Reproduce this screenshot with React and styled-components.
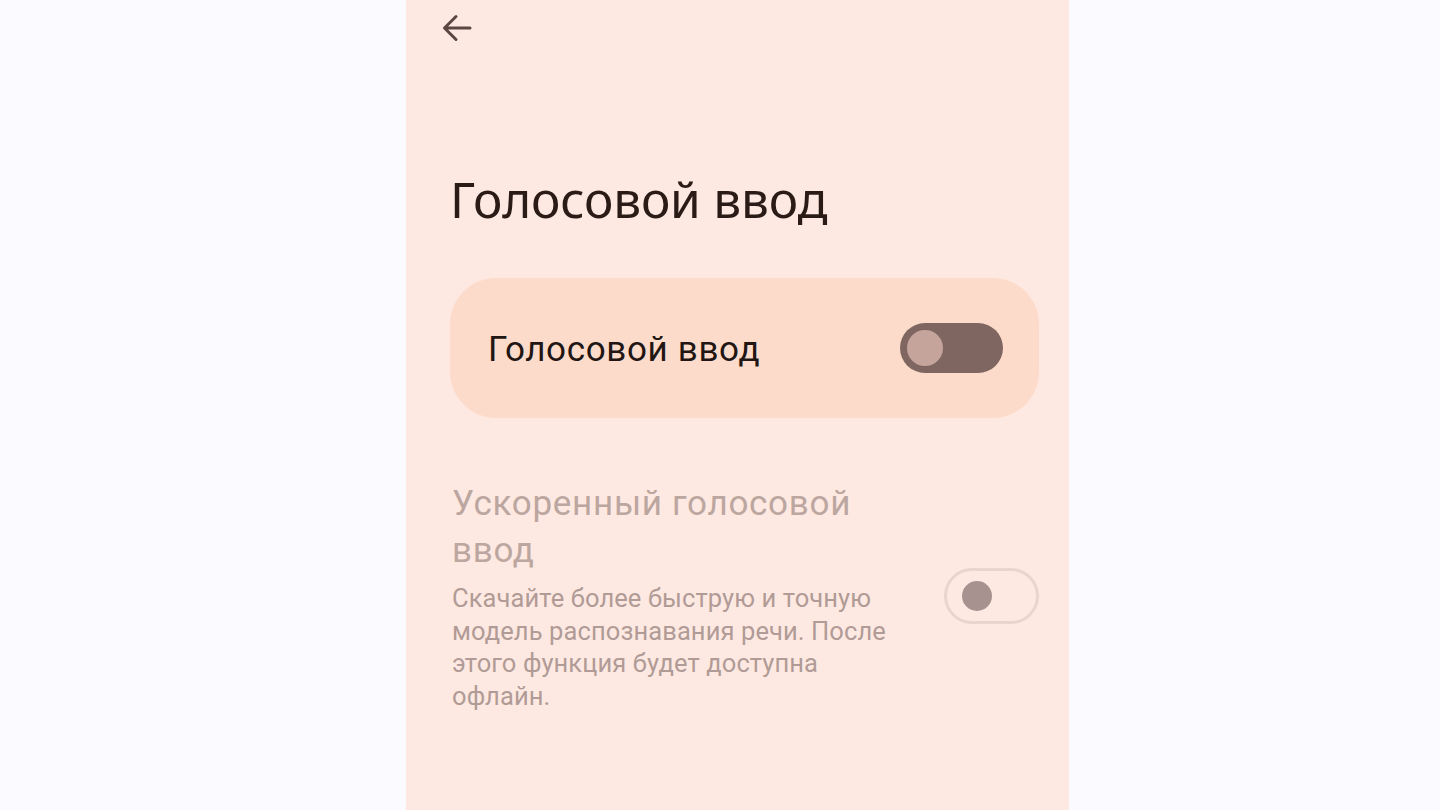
import styled, { createGlobalStyle } from "styled-components";

const Global = createGlobalStyle`
  html, body {
    margin: 0;
    padding: 0;
    background: #fbfbff;
    font-family: Roboto, "Noto Sans", sans-serif;
  }
`;

export default function App() {
  return (
    <>
      <Global />
      <Page>
        <Panel>
          <TopBar>
            <BackButton aria-label="Назад">
              <svg width="30" height="30" viewBox="0 0 30 30" fill="none">
                <path
                  d="M28 15H3M14 3.5L2.5 15L14 26.5"
                  stroke="#5b4742"
                  strokeWidth="3"
                  strokeLinecap="round"
                  strokeLinejoin="round"
                />
              </svg>
            </BackButton>
          </TopBar>

          <Title>Голосовой ввод</Title>

          <MainCard>
            <CardLabel>Голосовой ввод</CardLabel>
            <Switch $on />
          </MainCard>

          <SettingRow>
            <SettingText>
              <SettingTitle>Ускоренный голосовой ввод</SettingTitle>
              <SettingDesc>
                Скачайте более быструю и точную модель распознавания речи.
                После этого функция будет доступна офлайн.
              </SettingDesc>
            </SettingText>
            <Switch $disabled />
          </SettingRow>
        </Panel>
      </Page>
    </>
  );
}

// styles
const Page = styled.div`
  display: flex;
  width: 1440px;
  height: 810px;
  overflow: hidden;
  padding-left: 406px;
  box-sizing: border-box;
`;

const Panel = styled.main`
  width: 663px;
  height: 810px;
  background: #fee9e2;
  display: flex;
  flex-direction: column;
  padding: 13px 30px 0 44px;
  box-sizing: border-box;
`;

const TopBar = styled.header`
  display: flex;
  align-items: center;
  height: 30px;
`;

const BackButton = styled.button`
  display: flex;
  border: 0;
  background: none;
  padding: 0;
  margin-left: -8px;
  cursor: pointer;
`;

const Title = styled.h1`
  margin: 121px 0 0 0;
  font-family: "Noto Sans", Roboto, sans-serif;
  font-weight: 400;
  font-size: 49.5px;
  line-height: 70px;
  color: #2a1b17;
  letter-spacing: -0.2px;
`;

const MainCard = styled.section`
  margin-top: 44px;
  height: 140px;
  border-radius: 46px;
  background: #fddbca;
  display: flex;
  align-items: center;
  justify-content: space-between;
  padding: 0 36px 0 38px;
  box-sizing: border-box;
`;

const CardLabel = styled.span`
  font-size: 35px;
  color: #211613;
  letter-spacing: 0.65px;
  margin-top: 2px;
`;

const Switch = styled.span`
  position: relative;
  flex: none;
  width: ${(p) => (p.$on ? "103px" : "95px")};
  height: ${(p) => (p.$on ? "50px" : "56px")};
  border-radius: 30px;
  box-sizing: border-box;
  background: ${(p) => (p.$on ? "#7f6660" : "transparent")};
  border: ${(p) => (p.$on ? "0" : "3px solid #ead5cd")};

  &::after {
    content: "";
    position: absolute;
    top: 50%;
    transform: translateY(-50%);
    left: ${(p) => (p.$on ? "7px" : "15px")};
    width: ${(p) => (p.$on ? "36px" : "30px")};
    height: ${(p) => (p.$on ? "36px" : "30px")};
    border-radius: 50%;
    background: ${(p) => (p.$on ? "#c5a49c" : "#a8928f")};
  }
`;

const SettingRow = styled.section`
  margin-top: 62px;
  display: flex;
  align-items: center;
  justify-content: space-between;
  padding-left: 2px;
`;

const SettingText = styled.div`
  width: 445px;
  display: flex;
  flex-direction: column;
`;

const SettingTitle = styled.h2`
  margin: 0;
  font-weight: 400;
  font-size: 35px;
  line-height: 47px;
  color: #bca6a0;
  letter-spacing: 0.7px;
  width: 420px;
`;

const SettingDesc = styled.p`
  margin: 8px 0 0;
  font-size: 25.5px;
  line-height: 32.5px;
  color: #b19b96;
  letter-spacing: 0.1px;
`;
